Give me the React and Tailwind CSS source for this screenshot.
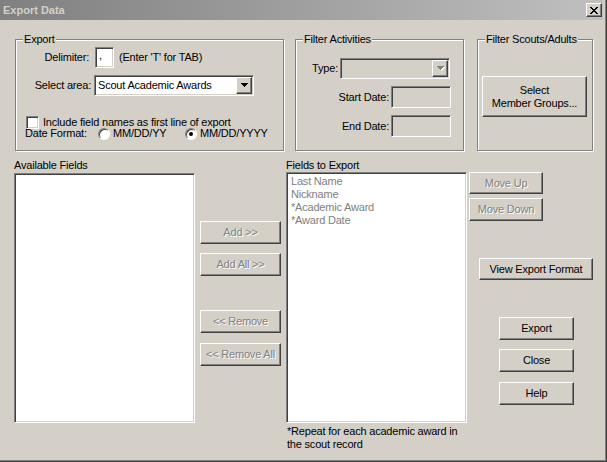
import React from 'react';

const sunken = 'border border-t-[#808080] border-l-[#808080] border-r-white border-b-white shadow-[inset_1px_1px_0_#404040,inset_-1px_-1px_0_#d4d0c8]';
const raised = 'border border-t-white border-l-white border-r-[#404040] border-b-[#404040] shadow-[inset_-1px_-1px_0_#808080] bg-[#d4d0c8]';
const grayText = 'text-[#808080] [text-shadow:1px_1px_0_#fff]';
const groupBox = 'border border-[#808080] shadow-[inset_1px_1px_0_#fff,1px_1px_0_#fff] h-[118px] min-w-0';

function Arrow({ disabled }) {
  return (
    <svg width="8" height="5" viewBox="0 0 8 5" shapeRendering="crispEdges">
      {disabled && (
        <path d="M1 1h7v1H1zM2 2h5v1H2zM3 3h3v1H3zM4 4h1v1H4z" fill="#fff" />
      )}
      <path d="M0 0h7v1H0zM1 1h5v1H1zM2 2h3v1H2zM3 3h1v1H3z" fill={disabled ? '#808080' : '#000'} />
    </svg>
  );
}

function Combo({ value, disabled, className }) {
  return (
    <div className={`${sunken} p-[1px] flex ${disabled ? 'bg-[#d4d0c8]' : 'bg-white'} ${className}`}>
      <div className="flex-1 pl-[2px] flex items-center overflow-hidden whitespace-nowrap">{value}</div>
      <div className={`${raised} w-[16px] flex items-center justify-center pl-[1px]`}>
        <Arrow disabled={disabled} />
      </div>
    </div>
  );
}

function Radio({ checked }) {
  return (
    <div className="w-[12px] h-[12px] shrink-0 rounded-full border border-t-[#808080] border-l-[#808080] border-r-white border-b-white bg-white shadow-[inset_1px_1px_0_#404040] flex items-center justify-center">
      {checked && <div className="w-[4px] h-[4px] rounded-full bg-black" />}
    </div>
  );
}

function Btn({ children, disabled, className = '' }) {
  return (
    <div className={`${raised} flex items-center justify-center text-center whitespace-nowrap ${disabled ? grayText : ''} ${className}`}>
      {children}
    </div>
  );
}

function Legend({ children }) {
  return <legend className="ml-[7px] px-[1px] bg-[#d4d0c8] leading-[13px]">{children}</legend>;
}

export default function App() {
  return (
    <div className="w-[607px] h-[462px] bg-[#d4d0c8] border-r border-b border-[#404040] font-['Liberation_Sans',Arial,sans-serif] text-[11px] leading-[13px] tracking-[-0.2px] text-black overflow-hidden">
      <div className="h-full border-r border-b border-[#808080] pr-[2px] flex flex-col">
        {/* title bar */}
        <div className="h-[20px] shrink-0 bg-gradient-to-r from-[#808080] to-[#c0c0c0] flex items-center pl-[3px] pr-[1px]">
          <span className="font-bold text-[#d4d0c8] flex-1 tracking-normal">Export Data</span>
          <div className={`${raised} w-[16px] h-[14px] flex items-center justify-center`}>
            <svg width="8" height="7" viewBox="0 0 8 7" shapeRendering="crispEdges">
              <path d="M0 0h2v1H0zM6 0h2v1H6zM1 1h2v1H1zM5 1h2v1H5zM2 2h4v1H2zM3 3h2v1H3zM2 4h4v1H2zM1 5h2v1H1zM5 5h2v1H5zM0 6h2v1H0zM6 6h2v1H6z" fill="#000" />
            </svg>
          </div>
        </div>

        {/* top group boxes */}
        <div className="flex pl-[15px] mt-[13px]">
          <fieldset className={`${groupBox} w-[269px]`}>
            <Legend>Export</Legend>
            <div className="flex items-center mt-[1px] h-[21px]">
              <span className="w-[73px] text-right">Delimiter:</span>
              <div className={`${sunken} ml-[6px] w-[19px] h-[21px] bg-white pl-[3px] pt-[1px]`}>,</div>
              <span className="ml-[5px]">(Enter 'T' for TAB)</span>
            </div>
            <div className="flex items-center mt-[7px]">
              <span className="w-[75px] text-right">Select area:</span>
              <Combo value="Scout Academic Awards" className="ml-[3px] w-[160px] h-[21px]" />
            </div>
            <div className="flex items-center mt-[20px] h-[13px]">
              <div className={`${sunken} ml-[10px] w-[13px] h-[13px] bg-white`} />
              <span className="ml-[4px]">Include field names as first line of export</span>
            </div>
            <div className="flex items-center mt-[-2px] h-[13px]">
              <span className="ml-[9px] w-[73px]">Date Format:</span>
              <Radio />
              <span className="ml-[3px] w-[72px]">MM/DD/YY</span>
              <Radio checked />
              <span className="ml-[3px]">MM/DD/YYYY</span>
            </div>
          </fieldset>

          <fieldset className={`${groupBox} w-[169px] ml-[11px]`}>
            <Legend>Filter Activities</Legend>
            <div className="flex items-center mt-[12px]">
              <span className="w-[42px] text-right">Type:</span>
              <Combo disabled value="" className="ml-[2px] w-[110px] h-[21px]" />
            </div>
            <div className="flex items-center mt-[7px]">
              <span className="w-[93px] text-right">Start Date:</span>
              <div className={`${sunken} ml-[2px] w-[60px] h-[22px] bg-[#d4d0c8]`} />
            </div>
            <div className="flex items-center mt-[7px]">
              <span className="w-[93px] text-right">End Date:</span>
              <div className={`${sunken} ml-[2px] w-[60px] h-[22px] bg-[#d4d0c8]`} />
            </div>
          </fieldset>

          <fieldset className={`${groupBox} w-[116px] ml-[13px]`}>
            <Legend>Filter Scouts/Adults</Legend>
            <Btn className="ml-[4px] mt-[30px] w-[105px] h-[41px] flex-col">
              <span>Select</span>
              <span>Member Groups...</span>
            </Btn>
          </fieldset>
        </div>

        {/* lists */}
        <div className="flex pl-[14px] mt-[8px]">
          <div className="flex flex-col w-[181px]">
            <span className="h-[13px]">Available Fields</span>
            <div className={`${sunken} mt-[1px] h-[250px] bg-white`} />
          </div>

          <div className="flex flex-col ml-[5px] w-[81px]">
            <Btn disabled className="mt-[62px] h-[23px]">Add &gt;&gt;</Btn>
            <Btn disabled className="mt-[9px] h-[23px]">Add All &gt;&gt;</Btn>
            <Btn disabled className="mt-[34px] h-[23px]">&lt;&lt; Remove</Btn>
            <Btn disabled className="mt-[10px] h-[23px]">&lt;&lt; Remove All</Btn>
          </div>

          <div className="flex flex-col ml-[5px] w-[181px]">
            <span className="h-[13px]">Fields to Export</span>
            <div className={`${sunken} h-[251px] bg-white pl-[4px] pt-[2px] text-[#808080]`}>
              <div>Last Name</div>
              <div>Nickname</div>
              <div>*Academic Award</div>
              <div>*Award Date</div>
            </div>
            <div className="mt-[2px] pl-[1px]">
              *Repeat for each academic award in<br />the scout record
            </div>
          </div>

          <div className="flex flex-col ml-[2px]">
            <Btn disabled className="mt-[13px] w-[74px] h-[22px]">Move Up</Btn>
            <Btn disabled className="mt-[4px] w-[74px] h-[23px]">Move Down</Btn>
            <Btn className="ml-[10px] mt-[37px] w-[114px] h-[22px]">View Export Format</Btn>
            <Btn className="ml-[30px] mt-[37px] w-[75px] h-[23px]">Export</Btn>
            <Btn className="ml-[30px] mt-[9px] w-[75px] h-[23px]">Close</Btn>
            <Btn className="ml-[30px] mt-[10px] w-[75px] h-[23px]">Help</Btn>
          </div>
        </div>
      </div>
    </div>
  );
}
